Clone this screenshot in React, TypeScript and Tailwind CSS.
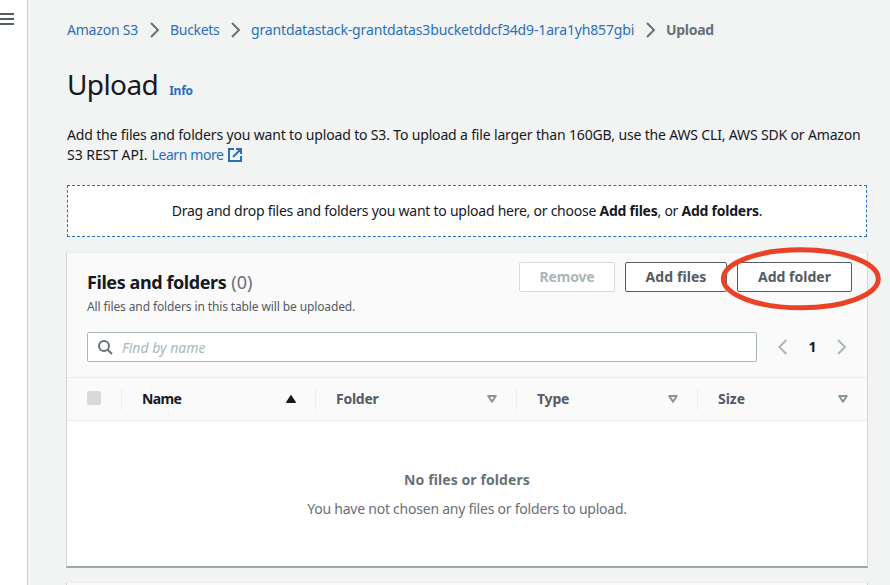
import React from 'react';

function Chevron({ className = '', flip = false }: { className?: string; flip?: boolean }) {
  return (
    <svg className={className} width="10" height="16" viewBox="0 0 10 16" fill="none" stroke="currentColor" strokeWidth="2">
      <path d={flip ? 'M8.4 1 1.4 8l7 7' : 'M1 1l7 7-7 7'} />
    </svg>
  );
}

function ExternalIcon() {
  return (
    <svg className="ml-1 shrink-0" width="14" height="14" viewBox="0 0 14 14" fill="none" stroke="currentColor" strokeWidth="2">
      <path d="M6 1H1v12h12V8M8 1h5v5M13 1 5 9" />
    </svg>
  );
}

function SortIcon({ active = false }: { active?: boolean }) {
  return active ? (
    <svg width="10" height="8" viewBox="0 0 10 8" className="text-[#16191f]">
      <path d="M5 .8 9.2 7.3H.8Z" fill="currentColor" stroke="currentColor" strokeWidth="1.4" strokeLinejoin="round" />
    </svg>
  ) : (
    <svg width="10" height="8" viewBox="0 0 10 8" className="text-[#879596]">
      <path d="M1.2 1h7.6L5 6.8Z" fill="none" stroke="currentColor" strokeWidth="2" strokeLinejoin="round" />
    </svg>
  );
}

type ColumnProps = { label: string; width: string; tracking: string; active?: boolean };

function Column({ label, width, tracking, active = false }: ColumnProps) {
  return (
    <div className={`flex h-[22px] items-center justify-between border-l border-[#eaeded] pl-5 pr-[19px] ${width}`}>
      <span className={`font-bold ${tracking} ${active ? 'text-[#16191f]' : 'text-[#545b64]'}`}>{label}</span>
      <SortIcon active={active} />
    </div>
  );
}

export default function App() {
  return (
    <div className="flex h-[585px] w-[890px] overflow-hidden bg-[#f2f3f3] font-['Noto_Sans','Open_Sans',sans-serif] text-sm leading-5 text-[#16191f]">
      <aside className="w-7 shrink-0 border-r border-[#c9cecf] bg-white pt-[13px]">
        <div className="flex w-[14px] flex-col gap-[3px]">
          <span className="h-[2px] bg-[#545b64]" />
          <span className="h-[2px] bg-[#545b64]" />
          <span className="h-[2px] bg-[#545b64]" />
        </div>
      </aside>

      <main className="flex flex-1 flex-col pl-[38px]">
        <nav className="ml-px mt-5 flex h-5 shrink-0 items-center whitespace-nowrap text-[#2a6fbb]">
          <a className="w-[83px] tracking-[-0.21px]">Amazon S3</a>
          <Chevron className="w-[10px] shrink-0 text-[#687078]" />
          <a className="ml-[10px] w-[61px] tracking-[-0.3px]">Buckets</a>
          <Chevron className="shrink-0 text-[#687078]" />
          <a className="ml-[10px] w-[395px] tracking-[-0.15px]">grantdatastack-grantdatas3bucketddcf34d9-1ara1yh857gbi</a>
          <Chevron className="shrink-0 text-[#687078]" />
          <span className="ml-[10px] font-bold tracking-[-0.3px] text-[#687078]">Upload</span>
        </nav>

        <div className="ml-px mt-[26px] flex h-9 shrink-0 items-baseline">
          <h1 className="text-[28px] leading-9 tracking-[-0.6px]">Upload</h1>
          <a className="ml-[11px] text-xs font-bold tracking-[-0.25px] text-[#2a6fbb]">Info</a>
        </div>

        <div className="ml-px mt-[23px] h-10 shrink-0 whitespace-nowrap">
          <p className="tracking-[-0.16px]">
            Add the files and folders you want to upload to S3. To upload a file larger than 160GB, use the AWS CLI, AWS SDK or Amazon
          </p>
          <p className="flex items-center">
            <span className="w-[84.5px] tracking-[-0.04px]">S3 REST API.</span>
            <a className="flex items-center text-[#2a6fbb]">
              <span className="tracking-[-0.41px]">Learn more</span>
              <ExternalIcon />
            </a>
          </p>
        </div>

        <div className="ml-px mt-5 flex h-[52px] w-[800px] shrink-0 items-center justify-center whitespace-pre border border-dashed border-[#2a6fbb] bg-white tracking-[-0.25px]">
          <span>Drag and drop files and folders you want to upload here, or choose </span>
          <b className="font-bold tracking-[-0.24px]">Add files</b>
          <span>, or </span>
          <b className="font-bold tracking-[-0.24px]">Add folders</b>.
        </div>

        <section className="mt-[15px] flex h-[316px] w-[802px] shrink-0 flex-col border border-b-2 border-[#d0d5d6] border-b-[#9fa7a9] border-t-[#eaeded] bg-white">
          <header className="relative h-[125px] shrink-0 border-b border-[#eaeded] bg-[#fafafa] pl-5 pr-[15px] pt-[9px]">
            <div className="flex h-[70px] justify-between">
              <div className="pt-[9px]">
                <h2 className="flex h-[22px] items-center gap-[5px] text-lg leading-[22px]">
                  <span className="font-bold tracking-[-0.42px]">Files and folders</span>
                  <span className="text-[#687078]">(0)</span>
                </h2>
                <p className="mt-[6px] text-xs leading-4 tracking-[-0.12px] text-[#545b64]">All files and folders in this table will be uploaded.</p>
              </div>
              <div className="flex gap-[10px] font-bold text-[#545b64]">
                <button className="h-[30px] w-24 rounded-[2px] border border-[#d5dbdb] bg-white tracking-[-0.2px] text-[#aab7b8]">Remove</button>
                <button className="h-[30px] w-[102px] rounded-[2px] border border-[#545b64] bg-white tracking-[0.08px]">Add files</button>
                <button className="h-[30px] w-[115px] rounded-[2px] border border-[#545b64] bg-white">Add folder</button>
              </div>
            </div>
            <div className="flex items-center">
              <div className="flex h-[30px] w-[670px] items-center rounded-[2px] border border-[#aab7b8] bg-white pl-[10px] italic text-[#aab7b8]">
                <svg className="mr-[9px] text-[#687078]" width="15" height="15" viewBox="0 0 15 15" fill="none" stroke="currentColor" strokeWidth="2">
                  <circle cx="6" cy="6" r="5" />
                  <path d="m9.7 9.7 4.3 4.3" />
                </svg>
                <span className="pt-[2px]">Find by name</span>
              </div>
              <Chevron flip className="ml-[21px] text-[#aab7b8]" />
              <span className="w-[49px] text-center font-bold">1</span>
              <Chevron className="text-[#aab7b8]" />
            </div>
            <svg className="absolute left-[653px] top-[-7px] z-10" width="162" height="66" viewBox="0 0 162 66" fill="none">
              <ellipse cx="80.8" cy="32.8" rx="77.5" ry="29" stroke="#ea4226" strokeWidth="5" />
            </svg>
          </header>

          <div className="flex h-[43px] shrink-0 items-center border-b border-[#eaeded] bg-[#fafafa] pl-5">
            <span className="mb-[2px] mr-5 h-[14px] w-[14px] rounded-[2px] bg-[#d5dbdb]" />
            <Column label="Name" width="w-[194px]" tracking="tracking-[-0.65px]" active />
            <Column label="Folder" width="w-[201px]" tracking="tracking-[-0.25px]" />
            <Column label="Type" width="w-[181px]" tracking="tracking-[-0.2px]" />
            <Column label="Size" width="w-[170px]" tracking="tracking-[-0.03px]" />
          </div>

          <div className="flex flex-col items-center pt-[49px] text-[#687078]">
            <b className="font-bold tracking-[0.09px]">No files or folders</b>
            <p className="mt-[9px] tracking-[-0.23px]">You have not chosen any files or folders to upload.</p>
          </div>
        </section>

        <div className="mt-[14px] h-4 w-[802px] shrink-0 border border-[#d0d5d6] border-t-[#eaeded] bg-[#fafafa]" />
      </main>
    </div>
  );
}
